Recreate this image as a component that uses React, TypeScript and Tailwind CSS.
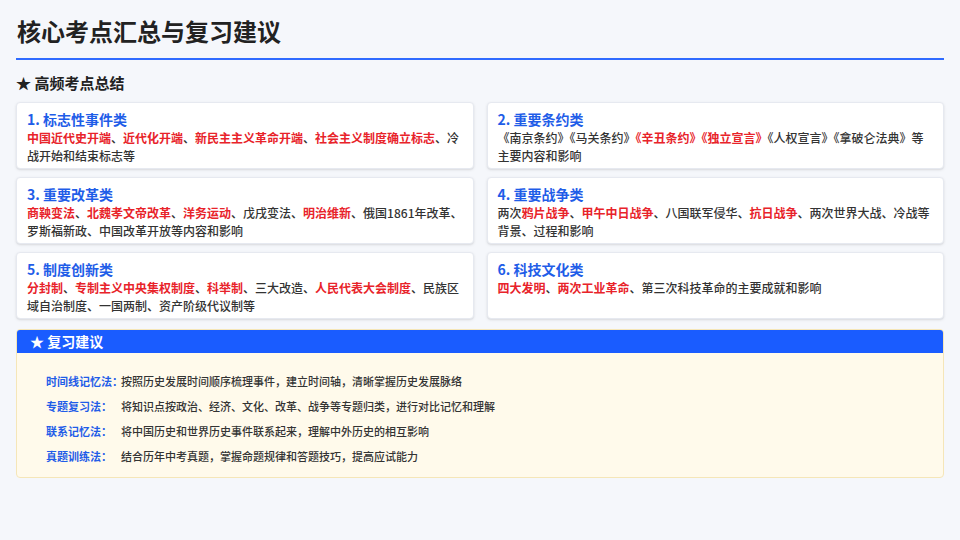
const R = ({ children }: { children: React.ReactNode }) => <span className="text-[#e8232a] font-bold">{children}</span>

const cards: { title: string; body: React.ReactNode }[] = [
  { title: '1. 标志性事件类', body: <><R>中国近代史开端</R>、<R>近代化开端</R>、<R>新民主主义革命开端</R>、<R>社会主义制度确立标志</R>、冷战开始和结束标志等</> },
  { title: '2. 重要条约类', body: <>《南京条约》《马关条约》<R>《辛丑条约》</R><R>《独立宣言》</R>《人权宣言》《拿破仑法典》等主要内容和影响</> },
  { title: '3. 重要改革类', body: <><R>商鞅变法</R>、<R>北魏孝文帝改革</R>、<R>洋务运动</R>、戊戌变法、<R>明治维新</R>、俄国1861年改革、罗斯福新政、中国改革开放等内容和影响</> },
  { title: '4. 重要战争类', body: <>两次<R>鸦片战争</R>、<R>甲午中日战争</R>、八国联军侵华、<R>抗日战争</R>、两次世界大战、冷战等背景、过程和影响</> },
  { title: '5. 制度创新类', body: <><R>分封制</R>、<R>专制主义中央集权制度</R>、<R>科举制</R>、三大改造、<R>人民代表大会制度</R>、民族区域自治制度、一国两制、资产阶级代议制等</> },
  { title: '6. 科技文化类', body: <><R>四大发明</R>、<R>两次工业革命</R>、第三次科技革命的主要成就和影响</> },
]

const tips = [
  ['时间线记忆法：', '按照历史发展时间顺序梳理事件，建立时间轴，清晰掌握历史发展脉络'],
  ['专题复习法：', '将知识点按政治、经济、文化、改革、战争等专题归类，进行对比记忆和理解'],
  ['联系记忆法：', '将中国历史和世界历史事件联系起来，理解中外历史的相互影响'],
  ['真题训练法：', '结合历年中考真题，掌握命题规律和答题技巧，提高应试能力'],
]

export default function App() {
  return (
    <div className="w-[960px] h-[540px] bg-[#f5f7fb] px-4 pt-[14px] overflow-hidden" style={{ fontFamily: '"Noto Sans CJK SC", "Liberation Serif", serif' }}>
      <h1 className="text-[24px] font-bold text-[#222] leading-[34px] pl-[1px]">核心考点汇总与复习建议</h1>
      <div className="mt-[10px] h-[2px] bg-[#2f6bff]" />
      <h2 className="mt-[12px] text-[15px] font-bold text-[#222] leading-[22px]">★ 高频考点总结</h2>
      <div className="mt-[8px] grid grid-cols-2 gap-x-[13px] gap-y-[8px]">
        {cards.map(c => (
          <div key={c.title} className="h-[67px] bg-white rounded-[4px] border border-[#e6e9f0] shadow-sm px-[10px] pt-[6px]">
            <div className="text-[14px] font-bold text-[#1f5de8] leading-[20px]">{c.title}</div>
            <div className="text-[12px] text-[#333] leading-[18px] font-medium">{c.body}</div>
          </div>
        ))}
      </div>
      <div className="mt-[10px] rounded-[4px] border border-[#f5e6b8] bg-[#fffaeb] h-[149px] overflow-hidden">
        <div className="h-[23px] bg-[#1a5cff] text-white text-[14px] font-bold leading-[23px] pl-[13px]">★ 复习建议</div>
        <div className="pl-[29px] pt-[19px] flex flex-col gap-[6px]">
          {tips.map(([k, v]) => (
            <div key={k} className="flex text-[11px] leading-[19px] font-medium whitespace-nowrap">
              <span className="w-[75px] shrink-0 text-[#1f5de8] font-bold">{k}</span>
              <span className="text-[#333]">{v}</span>
            </div>
          ))}
        </div>
      </div>
    </div>
  )
}
